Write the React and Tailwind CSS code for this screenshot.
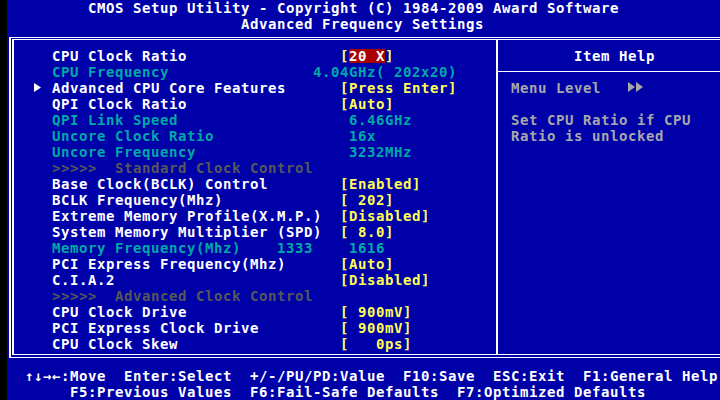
const Y = 'text-[#ffff55]';
const C = 'text-[#00a8a8]';
const G = 'text-[#585858]';
const W = 'text-white';

const rows = [
  { label: 'CPU Clock Ratio', value: [['[', Y], ['20 X', 'red'], [']', Y]] },
  { label: 'CPU Frequency', tone: C, shift: true, value: [['4.04GHz( 202x20)', C]] },
  { label: 'Advanced CPU Core Features', arrow: true, value: [['[Press Enter]', Y]] },
  { label: 'QPI Clock Ratio', value: [['[Auto]', Y]] },
  { label: 'QPI Link Speed', tone: C, value: [[' 6.46GHz', C]] },
  { label: 'Uncore Clock Ratio', tone: C, value: [[' 16x', C]] },
  { label: 'Uncore Frequency', tone: C, value: [[' 3232MHz', C]] },
  { label: '>>>>>  Standard Clock Control', tone: G },
  { label: 'Base Clock(BCLK) Control', value: [['[Enabled]', Y]] },
  { label: 'BCLK Frequency(Mhz)', value: [['[ 202]', Y]] },
  { label: 'Extreme Memory Profile(X.M.P.)', value: [['[Disabled]', Y]] },
  { label: 'System Memory Multiplier (SPD)', value: [['[ 8.0]', Y]] },
  { label: 'Memory Frequency(Mhz)    1333', tone: C, value: [[' 1616', C]] },
  { label: 'PCI Express Frequency(Mhz)', value: [['[Auto]', Y]] },
  { label: 'C.I.A.2', value: [['[Disabled]', Y]] },
  { label: '>>>>>  Advanced Clock Control', tone: G },
  { label: 'CPU Clock Drive', value: [['[ 900mV]', Y]] },
  { label: 'PCI Express Clock Drive', value: [['[ 900mV]', Y]] },
  { label: 'CPU Clock Skew', value: [['[   0ps]', Y]] },
];

function Row({ r }) {
  return (
    <div className="flex h-4 leading-[16px] pl-[20px]">
      <div className="w-[18px] shrink-0 pt-[3px]">
        {r.arrow && (
          <svg className="block" width="7" height="9" viewBox="0 0 7 9">
            <polygon points="0,0 7,4.5 0,9" fill="#ffffff" />
          </svg>
        )}
      </div>
      <div className={`w-[288px] shrink-0 whitespace-pre ${r.tone || W}`}>{r.label}</div>
      <div className={`flex items-start whitespace-pre ${r.shift ? '-ml-[27px]' : ''}`}>
        {r.value?.map(([t, c], i) =>
          c === 'red' ? (
            <span key={i} className="mt-px h-[14px] leading-[14px] bg-[#a80000] text-white">{t}</span>
          ) : (
            <span key={i} className={c}>{t}</span>
          )
        )}
      </div>
    </div>
  );
}

export default function App() {
  return (
    <div className="flex w-[720px] h-[400px] overflow-hidden bg-[#0000a8] text-white font-['DejaVu_Sans_Mono','Liberation_Mono',monospace] font-bold text-[14px] tracking-[0.57px]">
      <div className="w-[7px] shrink-0 bg-black" />

      <div className="flex flex-col flex-1 min-w-0">
        {/* Title */}
        <div className="h-4 leading-[16px] pl-[81px] whitespace-pre">
          CMOS Setup Utility - Copyright (C) 1984-2009 Award Software
        </div>
        <div className="h-4 leading-[16px] pl-[234px] whitespace-pre">Advanced Frequency Settings</div>

        {/* Main double frame */}
        <div className="h-[336px] pt-[5px] pl-[2px]">
          <div className="h-[321px] border-t border-b border-l-2 border-white pt-px pl-px">
            <div className="flex h-[316px] border-t border-b border-l-2 border-white">
              <div className="w-[482px] shrink-0 pt-2">
                {rows.map((r, i) => (
                  <Row key={i} r={r} />
                ))}
              </div>

              <div className="flex-1 border-l-2 border-white pt-2">
                <div className="h-4 leading-[16px] pl-[76px] whitespace-pre">Item Help</div>
                <div className="h-4 pt-[7px]">
                  <div className="h-px bg-white" />
                </div>
                <div className="flex h-4 leading-[16px] pl-[13px] text-[#a8a8a8]">
                  <span className="whitespace-pre">Menu Level   </span>
                  <svg className="block mt-[2px]" width="16" height="10" viewBox="0 0 16 10">
                    <polygon points="0,0 7,5 0,10" fill="#a8a8a8" />
                    <polygon points="8,0 15,5 8,10" fill="#a8a8a8" />
                  </svg>
                </div>
                <div className="h-4" />
                <div className="h-4 leading-[16px] pl-[13px] whitespace-pre text-[#a8a8a8]">Set CPU Ratio if CPU</div>
                <div className="h-4 leading-[16px] pl-[13px] whitespace-pre text-[#a8a8a8]">Ratio is unlocked</div>
              </div>
            </div>
          </div>
        </div>

        {/* Key legend */}
        <div className="h-4 leading-[16px] pl-[18px] whitespace-pre">
          ↑↓→←:Move  Enter:Select  +/-/PU/PD:Value  F10:Save  ESC:Exit  F1:General Help
        </div>
        <div className="h-4 leading-[16px] pl-[63px] whitespace-pre">
          F5:Previous Values  F6:Fail-Safe Defaults  F7:Optimized Defaults
        </div>
      </div>
    </div>
  );
}
